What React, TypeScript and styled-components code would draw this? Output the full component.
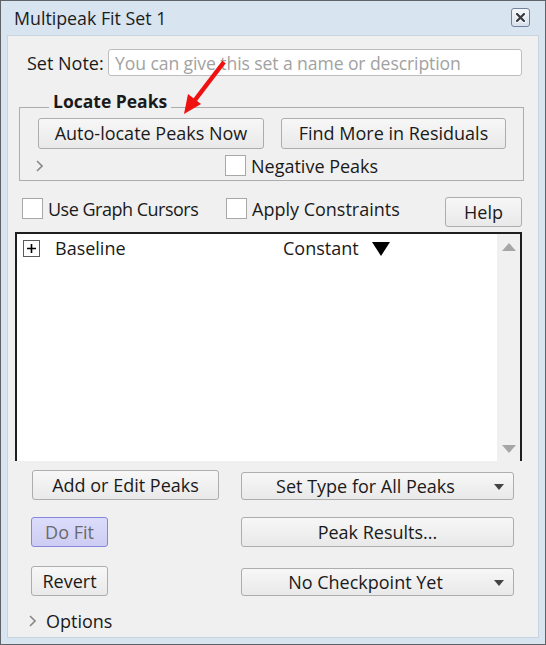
import React from 'react';
import styled, {createGlobalStyle} from 'styled-components';

const GlobalStyle = createGlobalStyle`
  html, body {
    margin: 0;
    padding: 0;
    background: #ffffff;
  }
  body {
    font-family: "Open Sans", "Noto Sans", sans-serif;
  }
`

const Window = styled.div`
  width: 546px;
  height: 645px;
  box-sizing: border-box;
  border: 1px solid #5f6368;
  background: #d9e4f1;
  display: flex;
  flex-direction: column;
`

const TitleBar = styled.div`
  height: 34px;
  display: flex;
  align-items: center;
  justify-content: space-between;
  padding: 0 15px 0 13px;
  font-size: 17.8px;
  color: #1c1c1c;
`

const CloseBox = styled.div`
  width: 17px;
  height: 17px;
  border: 1px solid #71829a;
  border-radius: 3px;
  background: linear-gradient(#f6f8fb, #d6dfeb);
  display: flex;
  align-items: center;
  justify-content: center;
  margin-top: -2px;
`

const Client = styled.div`
  position: relative;
  flex: 1;
  margin: 0 6px 6px 6px;
  background: #f0f0f0;
  border: 1px solid #c8d3e0;
  display: flex;
  flex-direction: column;
  font-size: 18px;
  color: #1a1a1a;
`

const NoteRow = styled.div`
  display: flex;
  align-items: center;
  margin: 13px 0 0 19px;
  height: 27px;
`

const Label = styled.span`
  width: 81px;
  white-space: nowrap;
`

const NoteInput = styled.input`
  width: 414px;
  height: 27px;
  box-sizing: border-box;
  border: 1px solid #bdbdbd;
  border-radius: 3px;
  background: #fff;
  font-family: inherit;
  font-size: 17.6px;
  letter-spacing: -0.1px;
  padding: 0 6px;
  color: #1e1e1e;
  &::placeholder {
    color: #a2a2a2;
  }
`

const Group = styled.div`
  position: relative;
  margin: 31px 0 0 11px;
  width: 505px;
  height: 74px;
  box-sizing: border-box;
  border: 1px solid #adadad;
  padding: 10px 0 0 18px;
`

const GroupTitle = styled.div`
  position: absolute;
  top: -18px;
  left: 29px;
  padding: 0 4px;
  background: #f0f0f0;
  font-weight: 700;
  font-size: 17.5px;
  line-height: 22px;
`

const ButtonRow = styled.div`
  display: flex;
  gap: 17px;
`

const Button = styled.div<{ $w: number; $h?: number }>`
  width: ${p => p.$w}px;
  height: ${p => p.$h ?? 30}px;
  box-sizing: border-box;
  border: 1px solid #adadad;
  border-radius: 3px;
  background: linear-gradient(#f7f7f7, #e9e9e9);
  display: flex;
  align-items: center;
  justify-content: center;
  white-space: nowrap;
  padding-bottom: 1px;
`

const FitButton = styled(Button)`
  border-color: #8686dc;
  background: linear-gradient(#dcdcfb, #cdcdf4);
  color: #6a6a6a;
`

const DropButton = styled(Button)`
  position: relative;
  justify-content: flex-start;
`

const DropText = styled.span`
  flex: 1;
  text-align: center;
  padding-right: 24px;
`

const DropArrow = styled.span`
  position: absolute;
  right: 9px;
  top: 11px;
  width: 0;
  height: 0;
  border-left: 5px solid transparent;
  border-right: 5px solid transparent;
  border-top: 6px solid #444;
`

const SubRow = styled.div`
  display: flex;
  align-items: center;
  margin-top: 6px;
  height: 21px;
`

const Chevron = styled.span<{ $left: number }>`
  margin-left: ${p => p.$left}px;
  width: 7px;
  height: 12px;
  display: inline-flex;
`

const Check = styled.span<{ $left: number }>`
  margin-left: ${p => p.$left}px;
  width: 21px;
  height: 21px;
  box-sizing: border-box;
  border: 1px solid #a8a8a8;
  background: #fff;
  flex-shrink: 0;
`

const CheckLabel = styled.span<{ $tight?: boolean }>`
  margin-left: 5px;
  white-space: nowrap;
  letter-spacing: ${p => p.$tight ? '-0.5px' : '0'};
`

const OptionsRow = styled.div`
  display: flex;
  align-items: flex-start;
  margin: 16px 0 0 0;
  height: 30px;
`

const CheckItem = styled.div<{ $left: number; $w: number }>`
  display: flex;
  align-items: center;
  height: 21px;
  margin-top: 1px;
  margin-left: ${p => p.$left}px;
  width: ${p => p.$w}px;
`

const HelpWrap = styled.div`
  margin-left: auto;
  margin-right: 16px;
`

const List = styled.div`
  margin: 5px 0 0 7px;
  width: 507px;
  height: 229px;
  box-sizing: border-box;
  border: 2px solid #1f1f1f;
  border-bottom: none;
  background: #fff;
  display: flex;
`

const ListBody = styled.div`
  flex: 1;
  padding: 3px 0 0 6px;
`

const ListRow = styled.div`
  display: flex;
  align-items: center;
  height: 22px;
`

const PlusBox = styled.span`
  width: 17px;
  height: 17px;
  box-sizing: border-box;
  border: 1px solid #5a5a5a;
  display: inline-flex;
  align-items: center;
  justify-content: center;
`

const Cell = styled.span<{ $w: number }>`
  width: ${p => p.$w}px;
  margin-left: 15px;
  white-space: nowrap;
`

const BlackTri = styled.span`
  width: 0;
  height: 0;
  border-left: 9px solid transparent;
  border-right: 9px solid transparent;
  border-top: 14px solid #000;
  margin-left: 13px;
  margin-top: 1px;
`

const ScrollBar = styled.div`
  width: 23px;
  background: #f0f0f0;
  display: flex;
  flex-direction: column;
  justify-content: space-between;
  align-items: center;
  padding: 9px 0 8px 0;
`

const ScrollArrow = styled.span<{ $up?: boolean }>`
  width: 0;
  height: 0;
  border-left: 7px solid transparent;
  border-right: 7px solid transparent;
  ${p => p.$up ? 'border-bottom: 8px solid #a6a6a6;' : 'border-top: 8px solid #a6a6a6;'}
`

const ActionRow = styled.div<{ $top: number }>`
  display: flex;
  align-items: flex-end;
  margin-top: ${p => p.$top}px;
  padding-left: 23px;
`

const LeftCell = styled.div`
  width: 210px;
`

const OptionsFooter = styled.div`
  display: flex;
  align-items: center;
  margin: 14px 0 0 21px;
  height: 22px;
  gap: 10px;
`

const ArrowMark = styled.svg`
  position: absolute;
  left: 163px;
  top: 15px;
`

const ChevronIcon = () => (
    <svg width="7" height="12" viewBox="0 0 7 12">
        <path d="M1 1 L6 6 L1 11" fill="none" stroke="#8a8a8a" strokeWidth="1.6"/>
    </svg>
)

export default function App() {
    return (
        <>
            <GlobalStyle/>
            <Window>
                <TitleBar>
                    <span>Multipeak Fit Set 1</span>
                    <CloseBox>
                        <svg width="11" height="11" viewBox="0 0 11 11">
                            <path d="M2 2 L9 9 M9 2 L2 9" stroke="#ffffff" strokeWidth="4.2" strokeLinecap="round"/>
                            <path d="M2 2 L9 9 M9 2 L2 9" stroke="#3a3d44" strokeWidth="2.4" strokeLinecap="round"/>
                        </svg>
                    </CloseBox>
                </TitleBar>
                <Client>
                    <NoteRow>
                        <Label>Set Note:</Label>
                        <NoteInput placeholder="You can give this set a name or description" readOnly/>
                    </NoteRow>

                    <Group>
                        <GroupTitle>Locate Peaks</GroupTitle>
                        <ButtonRow>
                            <Button $w={226} $h={31}>Auto-locate Peaks Now</Button>
                            <Button $w={225} $h={31}>Find More in Residuals</Button>
                        </ButtonRow>
                        <SubRow>
                            <Chevron $left={-2}><ChevronIcon/></Chevron>
                            <Check $left={182}/>
                            <CheckLabel>Negative Peaks</CheckLabel>
                        </SubRow>
                    </Group>

                    <OptionsRow>
                        <CheckItem $left={14} $w={204}>
                            <Check $left={0}/>
                            <CheckLabel $tight>Use Graph Cursors</CheckLabel>
                        </CheckItem>
                        <CheckItem $left={0} $w={200}>
                            <Check $left={0}/>
                            <CheckLabel>Apply Constraints</CheckLabel>
                        </CheckItem>
                        <HelpWrap>
                            <Button $w={77}>Help</Button>
                        </HelpWrap>
                    </OptionsRow>

                    <List>
                        <ListBody>
                            <ListRow>
                                <PlusBox>
                                    <svg width="11" height="11" viewBox="0 0 11 11">
                                        <path d="M5.5 1 V10 M1 5.5 H10" stroke="#000" strokeWidth="1.6"/>
                                    </svg>
                                </PlusBox>
                                <Cell $w={228}>Baseline</Cell>
                                <span>Constant</span>
                                <BlackTri/>
                            </ListRow>
                        </ListBody>
                        <ScrollBar>
                            <ScrollArrow $up/>
                            <ScrollArrow/>
                        </ScrollBar>
                    </List>

                    <ActionRow $top={9}>
                        <LeftCell>
                            <Button $w={187} style={{marginLeft: 1}}>Add or Edit Peaks</Button>
                        </LeftCell>
                        <DropButton $w={273} $h={28}>
                            <DropText>Set Type for All Peaks</DropText>
                            <DropArrow/>
                        </DropButton>
                    </ActionRow>

                    <ActionRow $top={17}>
                        <LeftCell>
                            <FitButton $w={77}>Do Fit</FitButton>
                        </LeftCell>
                        <Button $w={273}>Peak Results...</Button>
                    </ActionRow>

                    <ActionRow $top={19}>
                        <LeftCell>
                            <Button $w={77}>Revert</Button>
                        </LeftCell>
                        <DropButton $w={273} $h={28}>
                            <DropText>No Checkpoint Yet</DropText>
                            <DropArrow/>
                        </DropButton>
                    </ActionRow>

                    <OptionsFooter>
                        <ChevronIcon/>
                        <span>Options</span>
                    </OptionsFooter>

                    <ArrowMark width="62" height="66" viewBox="0 0 62 66">
                        <line x1="53" y1="11" x2="24" y2="49" stroke="#f01010" strokeWidth="4.5"/>
                        <polygon points="13,63 30,53 17,43" fill="#f01010"/>
                    </ArrowMark>
                </Client>
            </Window>
        </>
    );
}
